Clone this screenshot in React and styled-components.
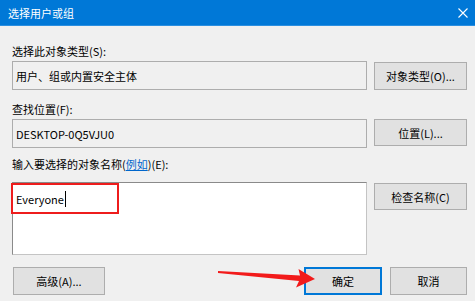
import React from 'react'
import styled, { createGlobalStyle } from 'styled-components'

const Global = createGlobalStyle`
  html, body {
    margin: 0;
    padding: 0;
    background: #f0f0f0;
  }
  * {
    box-sizing: border-box;
  }
`

const Window = styled.div`
  position: relative;
  width: 475px;
  height: 301px;
  background: #f0f0f0;
  font-family: "Microsoft YaHei UI", "Noto Sans CJK SC", "Noto Sans", sans-serif;
  font-size: 11px;
  color: #000;
  overflow: hidden;
`

const TitleBar = styled.div`
  height: 26px;
  background: #0078d7;
  border-bottom: 1px solid #2b8fe0;
  display: flex;
  align-items: center;
  justify-content: space-between;
  padding: 0 6px 0 8px;
  color: #fff;
  font-size: 11px;
`

const Body = styled.div`
  display: flex;
  flex-direction: column;
  padding: 17px 8px 0 12px;
`

const Label = styled.div`
  height: 16px;
  line-height: 16px;
  margin-top: ${p => p.$top || 0}px;
  margin-bottom: ${p => p.$bottom || 2}px;
  a {
    color: #0066cc;
    text-decoration: underline;
  }
`

const Row = styled.div`
  display: flex;
  align-items: flex-start;
  gap: 7px;
`

const Field = styled.div`
  position: relative;
  flex: 1;
  height: ${p => p.$h || 29}px;
  border: 1px solid ${p => (p.$white ? '#c4c4c4' : '#adadad')};
  border-left-color: ${p => (p.$white ? '#8a8a8a' : '#adadad')};
  border-top-color: ${p => (p.$white ? '#8a8a8a' : '#adadad')};
  background: ${p => (p.$white ? '#fff' : '#f0f0f0')};
  padding: 6px 3px;
  line-height: 16px;
`

const Button = styled.button`
  width: ${p => p.$w || 93}px;
  height: ${p => p.$h || 28}px;
  margin-top: ${p => p.$top || 0}px;
  background: #e1e1e1;
  border: ${p => (p.$default ? '2px solid #0078d7' : '1px solid #adadad')};
  font-family: inherit;
  font-size: 11px;
  color: #000;
  padding: 0;
`

const Footer = styled.div`
  display: flex;
  align-items: center;
  gap: 8px;
  margin-top: 12px;
  padding-left: 1px;
`

const Spacer = styled.div`
  flex: 1;
`

const Highlight = styled.div`
  position: absolute;
  left: -2px;
  top: 0;
  width: 108px;
  height: 31px;
  border: 2px solid #ee1c1c;
  padding: 6px 3px;
  line-height: 16px;
  display: flex;
  align-items: center;
`

const Caret = styled.span`
  display: inline-block;
  width: 1px;
  height: 16px;
  background: #000;
  margin-left: 1px;
`

const Arrow = styled.svg`
  position: absolute;
  left: 0;
  top: 0;
  pointer-events: none;
`

export default function App() {
  return (
    <Window>
      <Global />
      <TitleBar>
        <span>选择用户或组</span>
        <svg width="12" height="12" viewBox="0 0 12 12">
          <path d="M1.5 1.5 L10.5 10.5 M10.5 1.5 L1.5 10.5" stroke="#fff" strokeWidth="1.1" />
        </svg>
      </TitleBar>
      <Body>
        <Label>选择此对象类型(S):</Label>
        <Row>
          <Field>用户、组或内置安全主体</Field>
          <Button $top={1}>对象类型(O)...</Button>
        </Row>
        <Label $top={11}>查找位置(F):</Label>
        <Row>
          <Field>DESKTOP-0Q5VJU0</Field>
          <Button $h={27}>位置(L)...</Button>
        </Row>
        <Label $top={8} $bottom={10}>
          输入要选择的对象名称(<a>例如</a>)(E):
        </Label>
        <Row>
          <Field $white $h={73}>
            <Highlight>
              Everyone<Caret />
            </Highlight>
          </Field>
          <Button $top={1} $h={27}>检查名称(C)</Button>
        </Row>
        <Footer>
          <Button $w={92}>高级(A)...</Button>
          <Spacer />
          <Button $w={78} $default>确定</Button>
          <Button $w={77}>取消</Button>
        </Footer>
      </Body>
      <Arrow width="475" height="301" viewBox="0 0 475 301">
        <path d="M218 271 L300 275.5 L298.5 269 L315 279 L296 287.5 L299 281 L218 273 Z" fill="#f21b1b" />
      </Arrow>
    </Window>
  )
}
